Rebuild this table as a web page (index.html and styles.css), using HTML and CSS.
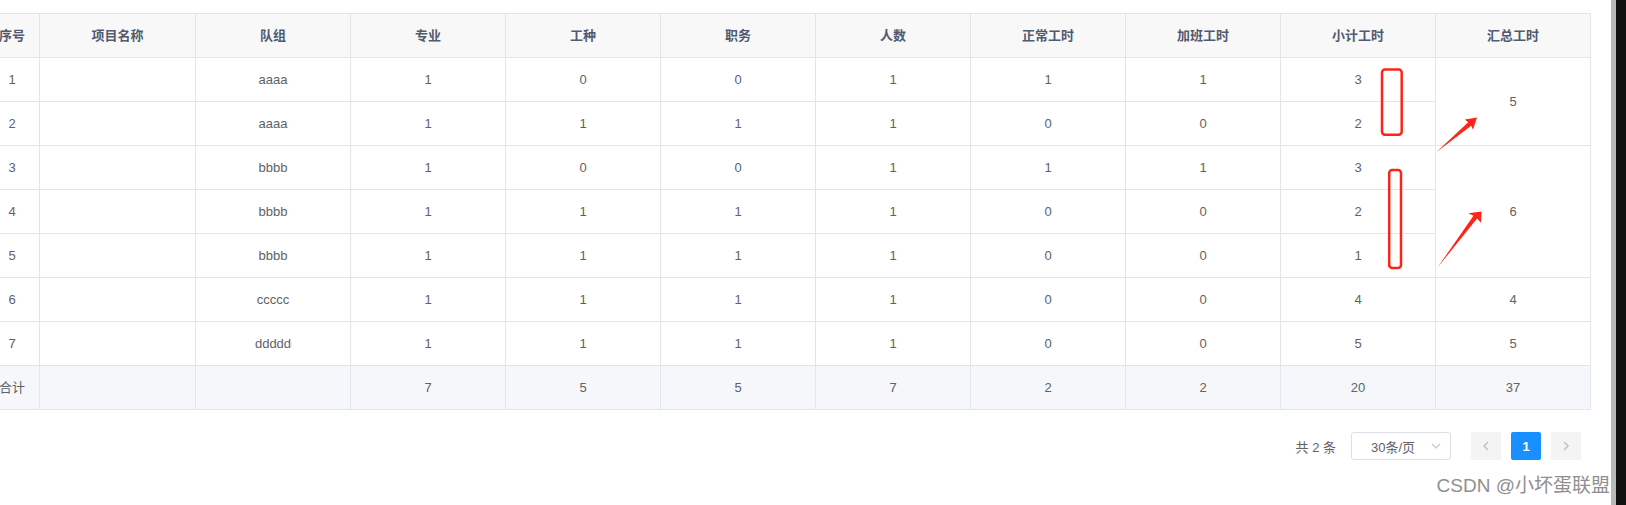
FILE: index.html
```html
<!DOCTYPE html>
<html lang="zh-CN">
<head>
<meta charset="utf-8">
<title>工时统计</title>
<link rel="stylesheet" href="styles.css">
</head>
<body>
<div class="page">
  <main class="main">
    <div class="table-wrap">
      <table class="grid">
        <thead>
          <tr>
            <th class="c-first">序号</th>
            <th class="c-wide">项目名称</th>
            <th class="c-col">队组</th>
            <th class="c-col">专业</th>
            <th class="c-col">工种</th>
            <th class="c-col">职务</th>
            <th class="c-col">人数</th>
            <th class="c-col">正常工时</th>
            <th class="c-col">加班工时</th>
            <th class="c-col">小计工时</th>
            <th class="c-col">汇总工时</th>
          </tr>
        </thead>
        <tbody>
          <tr><td>1</td><td></td><td>aaaa</td><td>1</td><td>0</td><td>0</td><td>1</td><td>1</td><td>1</td><td>3</td><td rowspan="2">5</td></tr>
          <tr><td>2</td><td></td><td>aaaa</td><td>1</td><td>1</td><td>1</td><td>1</td><td>0</td><td>0</td><td>2</td></tr>
          <tr><td>3</td><td></td><td>bbbb</td><td>1</td><td>0</td><td>0</td><td>1</td><td>1</td><td>1</td><td>3</td><td rowspan="3">6</td></tr>
          <tr><td>4</td><td></td><td>bbbb</td><td>1</td><td>1</td><td>1</td><td>1</td><td>0</td><td>0</td><td>2</td></tr>
          <tr><td>5</td><td></td><td>bbbb</td><td>1</td><td>1</td><td>1</td><td>1</td><td>0</td><td>0</td><td>1</td></tr>
          <tr><td>6</td><td></td><td>ccccc</td><td>1</td><td>1</td><td>1</td><td>1</td><td>0</td><td>0</td><td>4</td><td>4</td></tr>
          <tr><td>7</td><td></td><td>ddddd</td><td>1</td><td>1</td><td>1</td><td>1</td><td>0</td><td>0</td><td>5</td><td>5</td></tr>
        </tbody>
        <tfoot>
          <tr><td>合计</td><td></td><td></td><td>7</td><td>5</td><td>5</td><td>7</td><td>2</td><td>2</td><td>20</td><td>37</td></tr>
        </tfoot>
      </table>
    </div>

    <div class="pager">
      <span class="pager-total">共 2 条</span>
      <div class="pager-size">
        <span class="pager-size-text">30条/页</span>
        <svg class="pager-size-caret" width="10" height="6" viewBox="0 0 10 6"><path d="M1 1 L5 5 L9 1" fill="none" stroke="#c0c4cc" stroke-width="1.1"/></svg>
      </div>
      <button class="pager-btn" type="button">
        <svg width="8" height="10" viewBox="0 0 8 10"><path d="M6 1 L2 5 L6 9" fill="none" stroke="#c0c4cc" stroke-width="1.6"/></svg>
      </button>
      <button class="pager-btn pager-btn-active" type="button">1</button>
      <button class="pager-btn" type="button">
        <svg width="8" height="10" viewBox="0 0 8 10"><path d="M2 1 L6 5 L2 9" fill="none" stroke="#c0c4cc" stroke-width="1.6"/></svg>
      </button>
    </div>
  </main>
  <div class="scroll-thumb"></div>
  <div class="scroll-edge"></div>

  <svg class="marks" width="1626" height="505" viewBox="0 0 1626 505">
    <rect x="1382" y="69.5" width="19.7" height="65.3" rx="3" fill="none" stroke="#ff2418" stroke-width="2.5"/>
    <rect x="1389.2" y="170" width="11.8" height="98" rx="3" fill="none" stroke="#ff2418" stroke-width="2.5"/>
    <polygon points="1436.5,152 1471.2,125.8 1473,129.8 1477,117.5 1464.8,119.5 1468.2,122.2" fill="#ff2418"/>
    <polygon points="1437.5,267.5 1477.1,218.6 1481,222.7 1481.5,211.5 1468.3,213.3 1473.5,215.8" fill="#ff2418"/>
  </svg>

  <div class="watermark">CSDN @小坏蛋联盟</div>
</div>
</body>
</html>
```

FILE: styles.css
```css
html, body {
  margin: 0;
  padding: 0;
  background: #ffffff;
}

body {
  font-family: "Liberation Sans", "Noto Sans CJK SC", sans-serif;
  font-size: 13px;
  color: #606266;
}

.page {
  position: relative;
  display: flex;
  width: 1626px;
  height: 505px;
  overflow: hidden;
}

.main {
  flex: 1;
  min-width: 0;
  padding: 13px 20px 0 0;
  overflow: hidden;
}

.scroll-thumb {
  width: 5px;
  background: #b9b9b9;
}

.scroll-edge {
  width: 10px;
  background: #111111;
}

.table-wrap {
  margin-left: -16px;
}

.grid {
  width: 1607px;
  table-layout: fixed;
  border-collapse: separate;
  border-spacing: 0;
  border-top: 1px solid #dfe6ec;
  border-left: 1px solid #dfe6ec;
}

.grid tr {
  height: 44px;
}

.grid th,
.grid td {
  box-sizing: border-box;
  padding: 0;
  text-align: center;
  vertical-align: middle;
  border-right: 1px solid #dfe6ec;
  border-bottom: 1px solid #dfe6ec;
  line-height: 20px;
  white-space: nowrap;
  overflow: hidden;
}

.grid th {
  background: #f8f8f9;
  color: #515a6e;
  font-weight: 700;
}

.grid td {
  background: #ffffff;
  color: #606266;
}

.grid tfoot td {
  background: #f5f7fa;
}

.c-first { width: 55px; }
.c-wide { width: 156px; }
.c-col { width: 155px; }

.pager {
  display: flex;
  justify-content: flex-end;
  align-items: center;
  margin-top: 22px;
  padding-right: 10px;
  height: 28px;
}

.pager-total {
  margin-right: 15px;
  color: #606266;
}

.pager-size {
  box-sizing: border-box;
  display: flex;
  align-items: center;
  justify-content: space-between;
  width: 100px;
  height: 28px;
  padding: 0 9px 0 19px;
  margin-right: 20px;
  border: 1px solid #dcdfe6;
  border-radius: 3px;
  color: #606266;
}

.pager-size-caret {
  display: block;
}

.pager-btn {
  box-sizing: border-box;
  display: flex;
  align-items: center;
  justify-content: center;
  width: 30px;
  height: 28px;
  padding: 0;
  margin-left: 10px;
  border: 0;
  border-radius: 2px;
  background: #f4f4f5;
  font-family: "Liberation Sans", sans-serif;
  font-size: 13px;
  font-weight: 700;
  color: #606266;
}

.pager-size + .pager-btn {
  margin-left: 0;
}

.pager-btn-active {
  background: #1890ff;
  color: #ffffff;
}

.marks {
  position: absolute;
  top: 0;
  left: 0;
  pointer-events: none;
}

.watermark {
  position: absolute;
  right: 16px;
  bottom: 7px;
  font-family: "Liberation Sans", "Noto Sans CJK SC", sans-serif;
  font-size: 19px;
  line-height: 24px;
  color: #8f8f8f;
  text-shadow: 0 0 2px #ffffff, 0 0 1px #ffffff;
  white-space: nowrap;
}
```
